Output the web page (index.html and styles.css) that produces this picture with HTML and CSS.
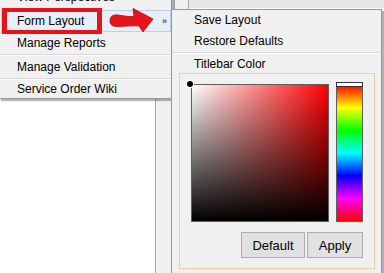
FILE: index.html
```html
<!DOCTYPE html>
<html>
<head>
<meta charset="utf-8">
<link rel="stylesheet" href="styles.css">
</head>
<body>
<div class="app">
  <div class="canvas"></div>
  <div class="strip"></div>
  <div class="right">
    <div class="right-top">
      <div class="rt-gap"></div>
      <div class="rt-col"></div>
      <div class="rt-band"></div>
    </div>
  </div>
</div>

<div class="menu main-menu">
  <div class="item item-first">View Perspectives</div>
  <div class="item item-active"><span>Form Layout</span><span class="more">»</span></div>
  <div class="item">Manage Reports</div>
  <div class="sep"></div>
  <div class="item">Manage Validation</div>
  <div class="sep"></div>
  <div class="item item-last">Service Order Wiki</div>
</div>

<div class="menu sub-menu">
  <div class="sub-item">Save Layout</div>
  <div class="sub-item">Restore Defaults</div>
  <div class="sep"></div>
  <div class="sub-item sub-title">Titlebar Color</div>
  <div class="picker">
    <div class="picker-main">
      <div class="sv-square"><span class="sv-dot"></span></div>
      <div class="hue-bar"><span class="hue-mark"></span></div>
    </div>
    <div class="picker-buttons">
      <button class="btn btn-default">Default</button>
      <button class="btn btn-apply">Apply</button>
    </div>
  </div>
</div>

<div class="callout-box"></div>
<svg class="callout-arrow" width="160" height="40" viewBox="0 0 160 40">
  <path d="M110,21 C110,16 113,14.5 118,15 C124,15.8 129,17 134,16.5 L133,8.5 L153,19 L143,32 L139,26 C132,25.5 125,26.5 118,26.5 C113,26.8 110,25 110,21 Z" fill="#e8141c" stroke="#b50d12" stroke-width="0.8"/>
</svg>
</body>
</html>
```
FILE: styles.css
```css
html, body {
  margin: 0;
  padding: 0;
}
body {
  width: 384px;
  height: 273px;
  overflow: hidden;
  position: relative;
  background: #ffffff;
  font-family: "Liberation Sans", Arial, sans-serif;
  font-size: 12px;
  color: #000;
}
.app {
  display: flex;
  height: 273px;
}
.canvas {
  width: 155px;
  background: #ffffff;
  border-right: 1px solid #a9a9a9;
}
.strip {
  width: 15px;
  background: #eef0f2;
  border-right: 1px solid #a0a0a0;
}
.right {
  flex: 1;
  background: #f7f7f7;
}
.right-top {
  display: flex;
  height: 9px;
}
.rt-gap {
  width: 2px;
  background: #f0f0f0;
}
.rt-col {
  width: 13px;
  background: #f0f0f0;
  border-left: 1px solid #a6a6a6;
  border-right: 1px solid #a6a6a6;
}
.rt-band {
  flex: 1;
  height: 8px;
  background: #e6e6e6;
  border-bottom: 1px solid #fbfbfb;
}

.menu {
  position: absolute;
  box-sizing: border-box;
  background: #f0f0f0;
  border: 1px solid #979797;
  box-shadow: 2px 2px 1px rgba(0, 0, 0, 0.28);
}
.main-menu {
  left: -1px;
  top: -15px;
  width: 173px;
}
.item {
  height: 22px;
  line-height: 22px;
  padding-left: 17px;
  white-space: nowrap;
}
.item-first {
  height: 24px;
}
.item-active {
  box-sizing: border-box;
  margin-left: 1px;
  padding-left: 15px;
  padding-right: 3px;
  line-height: 20px;
  border: 1px solid #bcd0ec;
  background: #e8eef8;
  display: flex;
  justify-content: space-between;
}
.more {
  font-size: 9px;
  line-height: 21px;
}
.item-last {
  height: 18px;
  line-height: 18px;
}
.sep {
  height: 0;
  border-top: 1px solid #d9d9d9;
  border-bottom: 1px solid #fcfcfc;
}

.sub-menu {
  left: 171px;
  top: 9px;
  width: 211px;
  height: 270px;
}
.sub-item {
  height: 21px;
  line-height: 21px;
  padding-left: 22px;
  white-space: nowrap;
}
.sub-title {
  height: 19px;
  box-sizing: border-box;
  padding-top: 1px;
  line-height: 18px;
}
.picker {
  box-sizing: border-box;
  margin-left: 7px;
  width: 196px;
  height: 196px;
  border: 1px solid #f3c9a2;
  padding: 10px 11px;
}
.picker-main {
  display: flex;
  gap: 7px;
}
.sv-square {
  position: relative;
  box-sizing: border-box;
  width: 138px;
  height: 138px;
  border: 1px solid #5e5e5e;
  background:
    linear-gradient(to top, #000 0%, rgba(0, 0, 0, 0) 100%),
    linear-gradient(to right, #ffffff 0%, #ff0000 100%);
}
.sv-dot {
  position: absolute;
  left: -5px;
  top: -4px;
  width: 6px;
  height: 6px;
  border-radius: 50%;
  background: #000;
  box-shadow: 0 0 0 1px #ffffff;
}
.hue-bar {
  position: relative;
  box-sizing: border-box;
  width: 27px;
  height: 138px;
  border: 1px solid #5e5e5e;
  background: linear-gradient(to bottom,
    #ff0000 0%, #ffff00 16.67%, #00ff00 33.33%, #00ffff 50%,
    #0000ff 66.67%, #ff00ff 83.33%, #ff0000 100%);
}
.hue-mark {
  position: absolute;
  left: -1px;
  top: -3px;
  box-sizing: border-box;
  width: 27px;
  height: 5px;
  border: 1px solid #333;
  background: #ffffff;
}
.picker-buttons {
  display: flex;
  justify-content: flex-end;
  gap: 2px;
  margin-top: 10px;
}
.btn {
  box-sizing: border-box;
  height: 26px;
  margin: 0;
  padding: 0;
  border: 1px solid #adadad;
  background: #e1e1e1;
  font-family: "Liberation Sans", Arial, sans-serif;
  font-size: 13px;
  color: #000;
  border-radius: 0;
}
.btn-default {
  width: 64px;
}
.btn-apply {
  width: 56px;
}

.callout-box {
  position: absolute;
  left: 2px;
  top: 8px;
  width: 100px;
  height: 26px;
  box-sizing: border-box;
  border-style: solid;
  border-color: #e3141b;
  border-width: 4px 5px;
}
.callout-arrow {
  position: absolute;
  left: 0;
  top: 0;
}
```
